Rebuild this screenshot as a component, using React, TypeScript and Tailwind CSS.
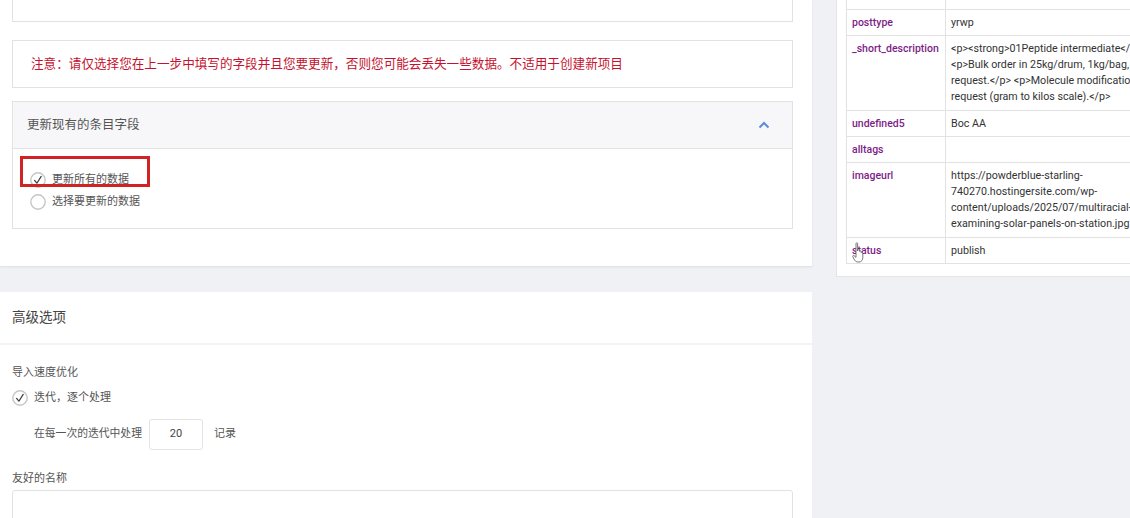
import React from "react";

const CJK = { fontFamily: "Roboto, 'Noto Sans CJK SC', sans-serif" };

const ROWS = [
  { key: "posttype", lines: ["yrwp"] },
  {
    key: "_short_description",
    lines: [
      "<p><strong>01Peptide intermediate</strong></p>",
      "<p>Bulk order in 25kg/drum, 1kg/bag, samples on",
      "request.</p> <p>Molecule modification on",
      "request (gram to kilos scale).</p>",
    ],
  },
  { key: "undefined5", lines: ["Boc AA"] },
  { key: "alltags", lines: [""] },
  {
    key: "imageurl",
    lines: [
      "https://powderblue-starling-",
      "740270.hostingersite.com/wp-",
      "content/uploads/2025/07/multiracial-engineer-",
      "examining-solar-panels-on-station.jpg",
    ],
  },
  { key: "status", lines: ["publish"] },
];

function Radio({ checked }: { checked?: boolean }) {
  return (
    <svg width="16" height="16" viewBox="0 0 16 16" className="flex-shrink-0">
      <circle cx="8" cy="8" r="7.2" fill="#fff" stroke="#c6c6c6" strokeWidth="1.4" />
      {checked && (
        <path d="M4.6 8.4 L6.9 11.2 L11.2 4.4" fill="none" stroke="#3a3a3a" strokeWidth="1.2" strokeLinecap="round" strokeLinejoin="round" />
      )}
    </svg>
  );
}

function HandCursor() {
  return (
    <svg width="14" height="22" viewBox="0 0 14 22" className="absolute left-[852px] top-[242px]">
      <path
        d="M4 1.5 C4 0.6 5.6 0.6 5.6 1.5 L5.6 9 L6 7.6 C6.2 6.8 7.6 6.9 7.6 7.8 L7.6 9.4 C7.8 8.6 9.2 8.7 9.2 9.6 L9.2 10.6 C9.4 9.9 10.8 10 10.8 10.9 L10.8 15.5 C10.8 18 9.4 20 7 20 L5.8 20 C4 20 3 18.8 2.2 17.4 L0.8 14.6 C0.4 13.8 1.4 13 2.1 13.6 L4 15.4 Z"
        fill="#fff"
        stroke="#666"
        strokeWidth="0.9"
        strokeLinejoin="round"
      />
    </svg>
  );
}

export default function App() {
  return (
    <div className="relative w-[1130px] h-[518px] overflow-hidden bg-[#f0f1f5] flex" style={CJK}>
      {/* Left column */}
      <div className="w-[812px] flex-shrink-0 flex flex-col gap-[26px]">
        <div className="bg-white pl-3 pr-[19px] pb-[37px] shadow-[0_1px_2px_rgba(0,0,0,0.08)]">
          <div className="h-[22px] border-x border-b border-[#e2e2e2]" />

          <div className="mt-[18px] h-[48px] border border-[#e2e2e2] flex items-center pl-[18px]">
            <span className="text-[12.6px] text-[#c4122f]">
              注意：请仅选择您在上一步中填写的字段并且您要更新，否则您可能会丢失一些数据。不适用于创建新项目
            </span>
          </div>

          <div className="mt-[13px] border border-[#e2e2e2]">
            <div className="h-[47px] bg-[#f7f7f9] border-b border-[#e2e2e2] flex items-center justify-between pl-[14px] pr-[22px]">
              <span className="text-[12.5px] text-[#555]">更新现有的条目字段</span>
              <svg width="12" height="8" viewBox="0 0 12 8">
                <path d="M1.5 6.5 L6 2 L10.5 6.5" fill="none" stroke="#5b8cd8" strokeWidth="2" />
              </svg>
            </div>
            <div className="relative h-[79px] pl-[17px] pt-[23px] flex flex-col gap-[6px]">
              <div className="flex items-center gap-[6px] h-[16px]">
                <Radio checked />
                <span className="text-[11px] text-[#555]">更新所有的数据</span>
              </div>
              <div className="flex items-center gap-[6px] h-[16px]">
                <Radio />
                <span className="text-[11px] text-[#555]">选择要更新的数据</span>
              </div>
              <div className="absolute left-[7px] top-[7px] w-[130px] h-[31px] border-[3px] border-[#d02424]" />
            </div>
          </div>
        </div>

        <div className="bg-white flex-1">
          <div className="h-[53px] border-b-2 border-[#f4f4f4] flex items-center pl-3">
            <span className="text-[13.5px] text-[#444]">高级选项</span>
          </div>
          <div className="pl-3 pr-[19px] pt-[20px]">
            <div className="text-[11px] text-[#555] leading-4">导入速度优化</div>
            <div className="mt-[9px] flex items-center gap-[6px] h-[16px]">
              <Radio checked />
              <span className="text-[11px] text-[#555]">迭代，逐个处理</span>
            </div>
            <div className="mt-[13px] pl-[22px] flex items-center h-[31px]">
              <span className="text-[10.8px] text-[#555]">在每一次的迭代中处理</span>
              <div className="ml-[7px] w-[54px] h-[31px] border border-[#e4e4e4] rounded-[3px] flex items-center justify-center text-[11px] text-[#444]">
                20
              </div>
              <span className="ml-[11px] text-[11px] text-[#555]">记录</span>
            </div>
            <div className="mt-[21px] text-[11px] text-[#555] leading-4">友好的名称</div>
            <div className="mt-[3px] h-[40px] border border-[#e2e2e2] rounded-t-[3px]" />
          </div>
        </div>
      </div>

      {/* Right column */}
      <div className="ml-[24px] flex-shrink-0 w-[420px]">
        <div className="h-[277px] bg-white border-x border-b border-[#e4e4e8] pl-[9px]">
          <div className="border-x border-b border-[#e2e2e2] text-[10.5px] leading-4" style={{ fontFamily: "Roboto, sans-serif" }}>
            <div className="flex h-[9px]">
              <div className="w-[99px] border-r border-[#e2e2e2]" />
              <div className="flex-1" />
            </div>
            {ROWS.map((r) => (
              <div
                key={r.key}
                className={`flex border-t border-[#e2e2e2] ${r.lines.length > 1 ? "h-[75px]" : "h-[26px]"}`}
              >
                <div className="w-[99px] flex-shrink-0 border-r border-[#e2e2e2] px-[5px] pt-[4.5px] font-medium text-[#7d1d88]">
                  {r.key}
                </div>
                <div className="flex-1 px-[5px] pt-[4.5px] text-[10.7px] text-[#333]">
                  {r.lines.map((l, i) => (
                    <div key={i} className="whitespace-nowrap h-4">
                      {l}
                    </div>
                  ))}
                </div>
              </div>
            ))}
          </div>
        </div>
      </div>

      <HandCursor />
    </div>
  );
}
